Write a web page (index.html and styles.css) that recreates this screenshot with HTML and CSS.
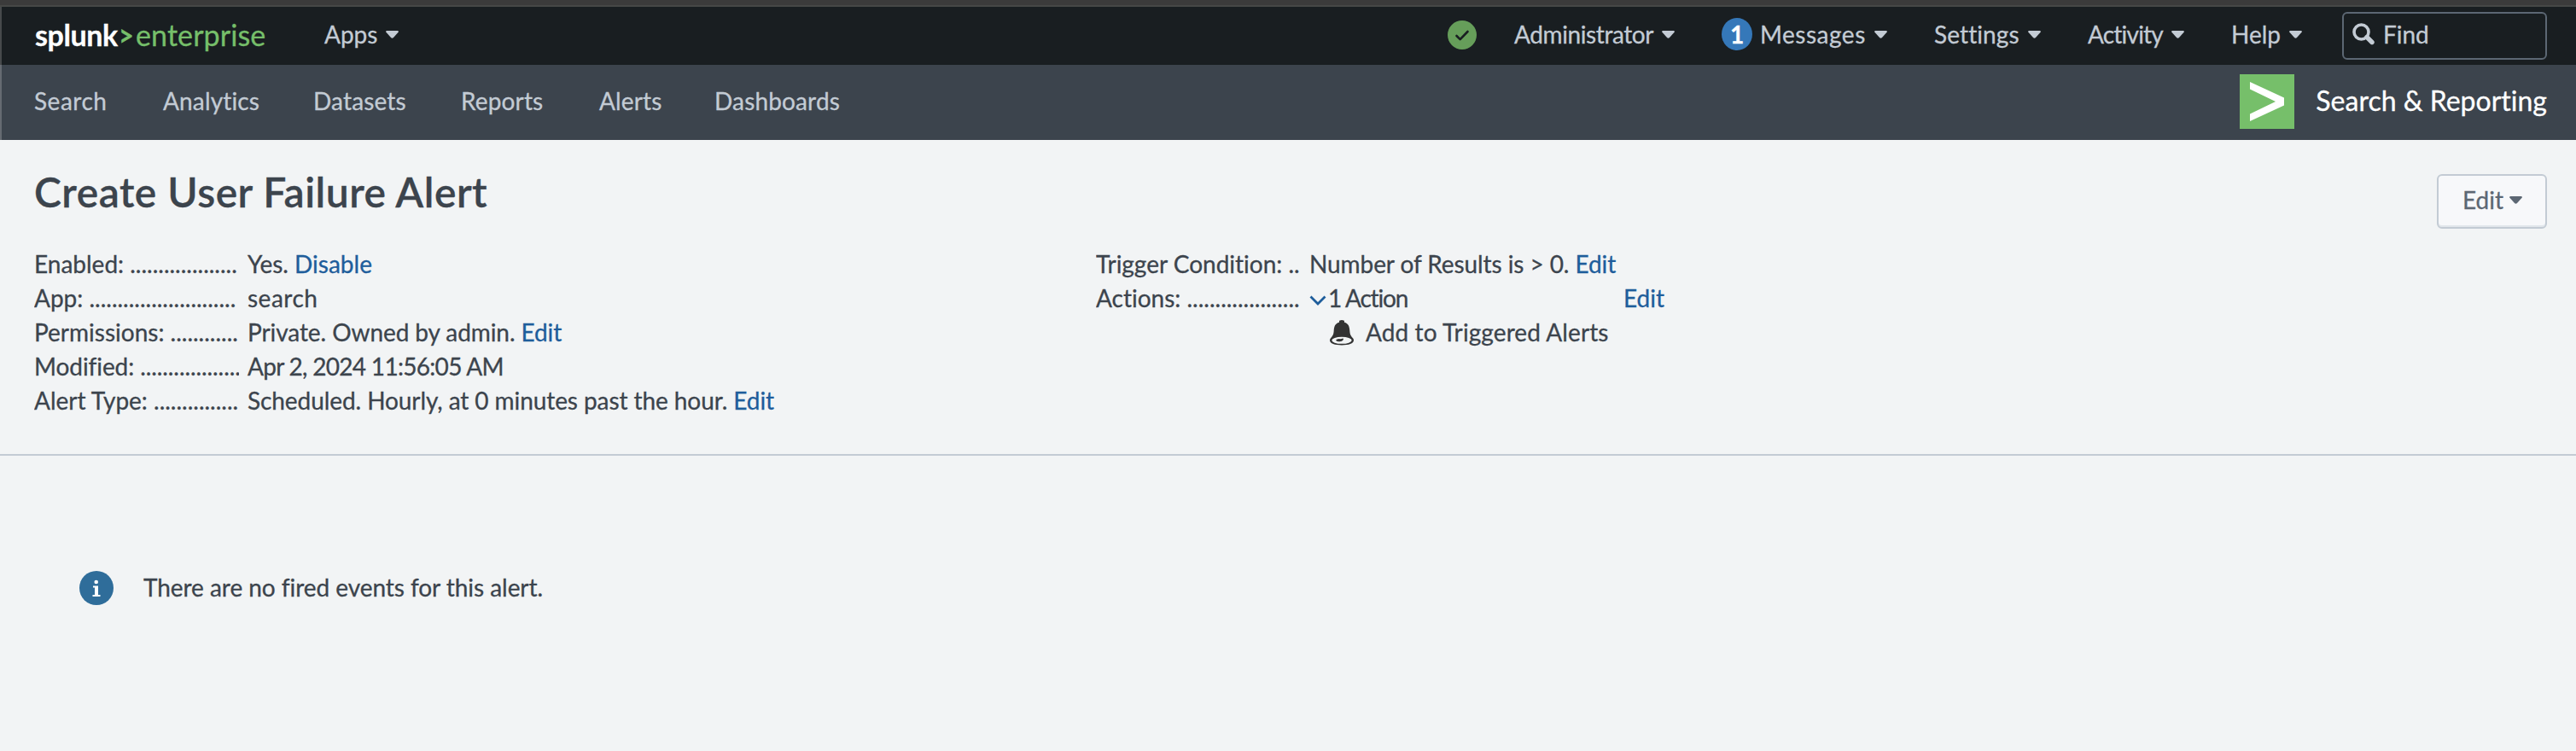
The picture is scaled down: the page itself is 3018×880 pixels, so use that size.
FILE: index.html
```html
<!DOCTYPE html>
<html lang="en">
<head>
<meta charset="utf-8">
<title>Create User Failure Alert | Splunk</title>
<link rel="stylesheet" href="styles.css">
</head>
<body>
<div class="window-edge"></div>
<header class="topbar">
  <a class="logo"><b class="brand">splunk</b><span class="gt">&gt;</span><span class="product">enterprise</span></a>
  <a class="menu apps">Apps<svg class="caret" viewBox="0 0 15 9"><path d="M1 0h13q1.500 .5 .6 1.800L9 8q-1.500 1.600-3 0L.4 1.800Q-.5 .5 1 0z"/></svg></a>
  <div class="topmenus">
    <span class="health"><svg viewBox="0 0 34 34"><circle cx="17" cy="17" r="17" fill="#669e5a"/><path d="M10.500 18l4.200 4.200L23.500 13" fill="none" stroke="#191e21" stroke-width="2.600" stroke-linecap="round" stroke-linejoin="round"/></svg></span>
    <a class="menu administrator">Administrator<svg class="caret" viewBox="0 0 15 9"><path d="M1 0h13q1.500 .5 .6 1.800L9 8q-1.500 1.600-3 0L.4 1.800Q-.5 .5 1 0z"/></svg></a>
    <a class="menu messages"><span class="badge">1</span><span class="spaced">Messages</span><svg class="caret" viewBox="0 0 15 9"><path d="M1 0h13q1.500 .5 .6 1.800L9 8q-1.500 1.600-3 0L.4 1.800Q-.5 .5 1 0z"/></svg></a>
    <a class="menu settings">Settings<svg class="caret" viewBox="0 0 15 9"><path d="M1 0h13q1.500 .5 .6 1.800L9 8q-1.500 1.600-3 0L.4 1.800Q-.5 .5 1 0z"/></svg></a>
    <a class="menu activity">Activity<svg class="caret" viewBox="0 0 15 9"><path d="M1 0h13q1.500 .5 .6 1.800L9 8q-1.500 1.600-3 0L.4 1.800Q-.5 .5 1 0z"/></svg></a>
    <a class="menu help">Help<svg class="caret" viewBox="0 0 15 9"><path d="M1 0h13q1.500 .5 .6 1.800L9 8q-1.500 1.600-3 0L.4 1.800Q-.5 .5 1 0z"/></svg></a>
    <div class="find"><svg class="lens" viewBox="0 0 26 26"><circle cx="10.500" cy="10.500" r="8.500" fill="none" stroke="#c3cbd4" stroke-width="3.600"/><path d="M17 16.500l6 6" stroke="#c3cbd4" stroke-width="5.400" stroke-linecap="round"/></svg><span>Find</span></div>
  </div>
</header>
<nav class="appbar">
  <div class="tabs"><a class="wide">Search</a><a>Analytics</a><a>Datasets</a><a>Reports</a><a>Alerts</a><a>Dashboards</a></div>
  <div class="appname"><svg class="appicon" viewBox="0 0 64 64"><path fill="#76bf6a" d="M0 0h64v64H0z"/><path fill="#fff" d="M12 9l40 18.500v9L12 55v-8.500L42 32 12 17.500z"/></svg><span>Search &amp; Reporting</span></div>
</nav>
<main>
  <section class="summary">
    <div class="heading">
      <h1>Create User Failure Alert</h1>
      <button class="edit">Edit<svg class="caret" viewBox="0 0 15 9"><path d="M1 0h13q1.500 .5 .6 1.800L9 8q-1.500 1.600-3 0L.4 1.800Q-.5 .5 1 0z"/></svg></button>
    </div>
    <div class="details">
      <dl>
        <dt>Enabled: ...................</dt><dd>Yes. <a>Disable</a></dd>
        <dt>App: ..........................</dt><dd class="wide">search</dd>
        <dt>Permissions: ............</dt><dd class="snug">Private. Owned by admin. <a>Edit</a></dd>
        <dt class="snug">Modified: ..................</dt><dd class="date">Apr 2, 2024 11:56:05 AM</dd>
        <dt>Alert Type: ...............</dt><dd class="snug">Scheduled. Hourly, at 0 minutes past the hour. <a>Edit</a></dd>
      </dl>
      <dl>
        <dt>Trigger Condition: ..</dt><dd class="snug">Number of Results is &gt; 0. <a>Edit</a></dd>
        <dt>Actions: ....................</dt>
        <dd>
          <div class="actionrow"><svg class="chevron" viewBox="0 0 20 12"><path d="M1.500 1.500L10 10l8.500-8.500" fill="none" stroke="#1e5d9b" stroke-width="2.800"/></svg><span class="count">1 Action</span><a>Edit</a></div>
          <div class="triggered"><svg class="bell" viewBox="0 0 28 30"><path fill="#333" d="M11 1.500Q11 0 14 0t3 1.500v1.200c5 1.300 6 5 6.300 9.800.2 4.500 1.700 6.500 3.500 8.500 1 1 1.200 2 1.200 2.800C28 27.500 22 29.500 14 29.500S0 27.500 0 23.800c0-.8.3-1.800 1.200-2.800 1.800-2 3.300-4 3.500-8.500C5 7.700 6 4 11 2.700z"/><ellipse cx="14" cy="23.800" rx="11.700" ry="4" fill="#f2f4f5"/><path fill="#333" d="M7 23.800q1-1.800 4-1.700 2 .3 4.200-.6 1.300.2.500 1.700-1.200 1.900-4.200 2.100T7 23.800z"/></svg><span>Add to Triggered Alerts</span></div>
        </dd>
      </dl>
    </div>
  </section>
  <div class="notice"><svg class="info" viewBox="0 0 40 40"><circle cx="20" cy="20" r="20" fill="#2f6d9a"/><circle cx="19.700" cy="13" r="2.300" fill="#fff"/><path fill="#fff" d="M16 17.500h6V28h2.500v2h-9v-2H18v-8.500h-2z"/></svg><span>There are no fired events for this alert.</span></div>
</main>
</body>
</html>
```
FILE: styles.css
```css
* { box-sizing: border-box; }
body {
  margin: 0;
  height: 880px;
  overflow: hidden;
  background: #f2f4f5;
  color: #3c444d;
  font-family: Lato, "Open Sans", sans-serif;
  font-size: 28px;
  line-height: 40px;
  font-variant-ligatures: none;
  -webkit-text-stroke: 0.3px currentColor;
}
a { color: #1e5d9b; text-decoration: none; }
svg { display: block; flex: none; }
span { white-space: nowrap; }

.window-edge { height: 8px; background: #3b3b3b; border-bottom: 2px solid #464846; }

.topbar {
  display: flex;
  align-items: flex-start;
  height: 68px;
  padding-right: 34px;
  border-left: 2px solid #46494b;
  background: #191e21;
  line-height: 65px;
  color: #c3cbd4;
}
.logo { display: flex; width: 378px; padding-left: 39px; font-size: 34px; line-height: 65px; color: #76bf6a; }
.brand { width: 98px; color: #fff; letter-spacing: -0.4px; }
.gt { width: 20px; font-weight: 700; transform: scaleX(0.9); transform-origin: left; }
.product { letter-spacing: 0.1px; }
.menu { display: flex; color: #c3cbd4; }
.caret { width: 15px; height: 9px; margin: 28px 0 0 10px; fill: currentColor; }
.topmenus { display: flex; margin-left: auto; }
.health { width: 78px; padding-top: 16px; }
.health svg { width: 34px; height: 34px; }
.administrator { width: 243px; letter-spacing: -0.4px; }
.messages { width: 249px; }
.badge {
  width: 36px;
  height: 38px;
  margin: 13px 9px 0 0;
  border-radius: 50%;
  background: #3578b9;
  color: #fff;
  line-height: 38px;
  text-align: center;
  font-weight: 700;
}
.spaced { letter-spacing: 0.5px; }
.settings { width: 180px; letter-spacing: 0.1px; }
.activity { width: 168px; letter-spacing: -0.8px; }
.help { width: 130px; }
.find {
  display: flex;
  width: 240px;
  height: 56px;
  margin-top: 6px;
  padding-left: 10px;
  border: 2px solid #5c6773;
  border-radius: 6px;
  line-height: 49px;
}
.lens { width: 26px; height: 26px; margin: 11px 10px 0 0; }

.appbar {
  display: flex;
  justify-content: space-between;
  height: 88px;
  padding: 0 34px 0 38px;
  border-left: 2px solid #656b72;
  background: #3c444d;
  line-height: 85px;
}
.tabs { display: grid; grid-template-columns: 151px 176px 173px 162px 135px auto; }
.tabs a { color: #c3cbd4; letter-spacing: 0.15px; }
.tabs .wide, .wide { letter-spacing: 0.5px; }
.snug { letter-spacing: -0.08px; }
.appname { display: flex; gap: 25px; color: #fff; font-size: 32px; line-height: 84px; }
.appicon { width: 64px; height: 64px; margin-top: 11px; }

.summary { height: 370px; padding: 39px 34px 0 40px; border-bottom: 2px solid #c3cbd4; }
.heading { display: flex; justify-content: space-between; height: 86px; }
h1 { margin: 0; font-size: 48px; line-height: 44px; font-weight: 600; letter-spacing: 0.5px; }
.edit {
  display: flex;
  width: 129px;
  height: 64px;
  margin-top: 1px;
  padding: 0 0 0 28px;
  border: 2px solid #c3cbd4;
  border-radius: 6px;
  background: #f7f8fa;
  box-shadow: inset 0 -2px #e1e6eb;
  color: #5c6773;
  font: 28px/57px Lato, sans-serif;
}
.edit .caret { margin: 24px 0 0 7px; }
.details { display: grid; grid-template-columns: 1244px 1fr; }
dl { display: grid; grid-template-columns: 240px 1fr; column-gap: 10px; align-content: start; margin: 0; }
dt { overflow: hidden; white-space: nowrap; }
dd { margin: 0; white-space: nowrap; }
.date { letter-spacing: -0.7px; }
.actionrow { display: flex; width: 416px; }
.actionrow a { margin-left: auto; }
.chevron { width: 20px; height: 12px; margin: 17px 2px 0 0; }
.count { letter-spacing: -1.2px; }
.triggered { display: flex; padding-left: 24px; }
.triggered span { letter-spacing: 0.1px; }
.bell { width: 28px; height: 30px; margin: 6px 14px 0 0; }

.notice { display: flex; align-items: center; padding: 134px 0 0 93px; }
.info { width: 40px; height: 40px; margin-right: 35px; }
.notice span { padding-bottom: 1px; letter-spacing: -0.05px; }
```
